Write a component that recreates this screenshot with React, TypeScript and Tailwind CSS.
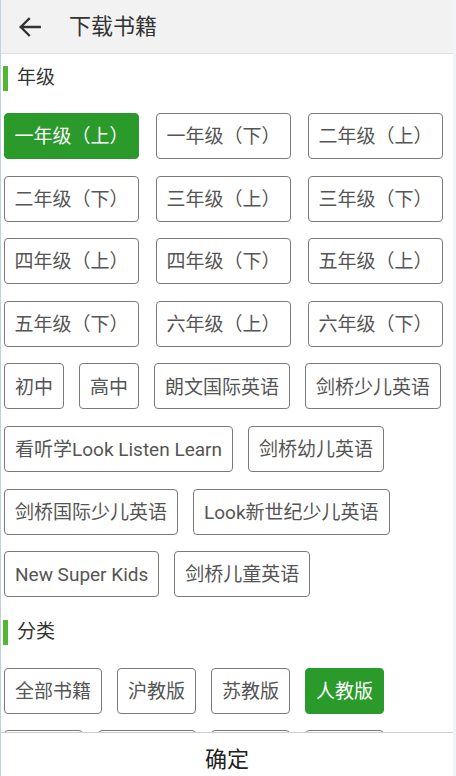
import React from 'react';

const grades = [
  '一年级（上）', '一年级（下）', '二年级（上）',
  '二年级（下）', '三年级（上）', '三年级（下）',
  '四年级（上）', '四年级（下）', '五年级（上）',
  '五年级（下）', '六年级（上）', '六年级（下）',
];

const series = [
  '初中', '高中', '朗文国际英语', '剑桥少儿英语',
  '看听学Look Listen Learn', '剑桥幼儿英语',
  '剑桥国际少儿英语', 'Look新世纪少儿英语',
  'New Super Kids', '剑桥儿童英语',
];

const categories = ['全部书籍', '沪教版', '苏教版', '人教版', '外研版', '北师大版', '冀教版', '湘少版'];

const font = { fontFamily: 'Roboto, "Noto Sans CJK SC", sans-serif' };

const Tag = ({ label, active, full }: { label: string; active?: boolean; full?: boolean }) => (
  <div
    className={`h-[46px] px-[10px] pt-[3px] flex items-center justify-center rounded-[4px] text-[19px] whitespace-nowrap ${
      full ? 'w-full' : ''
    } ${active ? 'bg-[#2a9b2a] text-white border border-[#2a9b2a]' : 'border border-[#7a7a7a] text-[#555]'}`}
  >
    {label}
  </div>
);

const SectionTitle = ({ title }: { title: string }) => (
  <div className="flex items-center h-[28px]">
    <span className="w-[5px] h-[25px] bg-[#52b633] -ml-px"></span>
    <span className="ml-[9px] text-[19px] text-[#333]">{title}</span>
  </div>
);

export default function App() {
  return (
    <div
      className="w-[456px] h-[776px] flex flex-col bg-white overflow-hidden border-l border-l-[#b9d3df] border-r-[3px] border-r-[#eef4f7]"
      style={font}
    >
      <header className="h-[54px] shrink-0 bg-[#f2f2f2] border-b border-[#e2e2e2] flex items-center">
        <svg className="ml-[16px] w-[26px] h-[26px]" viewBox="0 0 24 24" fill="none" stroke="#333" strokeWidth={2.2} strokeLinecap="square">
          <path d="M21 12H3.5M11 4.5L3.5 12l7.5 7.5" />
        </svg>
        <span className="ml-[26px] text-[22px] text-[#333]">下载书籍</span>
      </header>

      <main className="flex-1 overflow-hidden pl-[3px] pt-[10px]">
        <SectionTitle title="年级" />
        <div className="mt-[21px] flex flex-col gap-y-[16.6px] w-[446px]">
          <div className="grid grid-cols-[135px_135px_135px] gap-x-[17px] gap-y-[16.6px]">
            {grades.map((g, i) => (
              <Tag key={g + i} label={g} active={i === 0} full />
            ))}
          </div>
          <div className="flex flex-wrap gap-x-[15px] gap-y-[16.6px]">
            {series.map((s) => (
              <Tag key={s} label={s} />
            ))}
          </div>
        </div>

        <div className="mt-[21px]">
          <SectionTitle title="分类" />
        </div>
        <div className="mt-[22px] flex flex-wrap gap-x-[15px] gap-y-[16px] w-[446px]">
          {categories.map((c) => (
            <Tag key={c} label={c} active={c === '人教版'} />
          ))}
        </div>
      </main>

      <footer className="h-[44px] shrink-0 bg-white border-t border-[#cfcfcf] flex items-start justify-center pt-[12px]">
        <span className="text-[22px] leading-[30px] text-[#222]">确定</span>
      </footer>
    </div>
  );
}
